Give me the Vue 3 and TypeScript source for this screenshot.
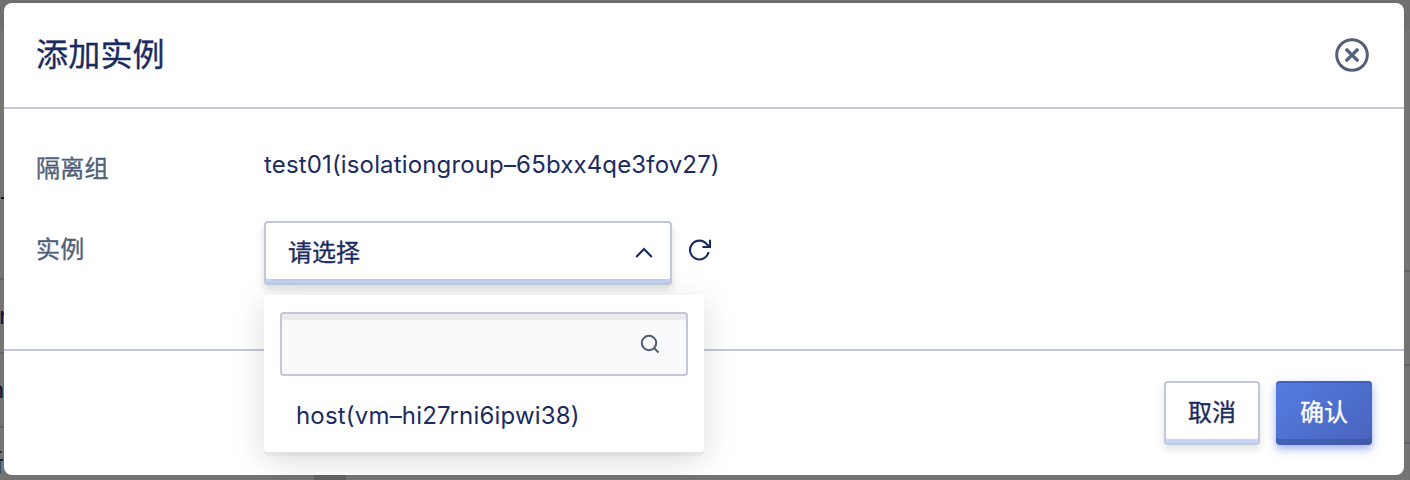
<script setup lang="ts">
import { ref } from 'vue'

interface Fragment { id: string; text: string; kind: string }

const groupName = 'test01(isolationgroup–65bxx4qe3fov27)'
const options = ref<string[]>(['host(vm–hi27rni6ipwi38)'])
const open = ref(true)
const keyword = ref('')
const fragments: Fragment[] = [
  { id: 'b', text: 'n', kind: 'f2' },
  { id: 'c', text: 'n', kind: 'f3' },
  { id: 'd', text: '新', kind: 'f4' },
]
</script>

<template>
  <div class="page">
    <div class="backdrop">
      <i class="topbar"></i>
      <i class="rule l1"></i><i class="rule l2"></i><i class="rule l3"></i>
      <i class="rule r1"></i><i class="rule r2"></i><i class="rule r3"></i>
      <i class="thumb"></i>
      <i class="dash"></i>
      <span v-for="f in fragments" :key="f.id" class="frag" :class="f.kind">{{ f.text }}</span>
    </div>
    <section class="modal">
      <header class="head">
        <h1>添加实例</h1>
        <svg class="close" width="34" height="34" viewBox="0 0 34 34" fill="none" stroke="#515f78">
          <circle cx="17" cy="17" r="15.3" stroke-width="3" />
          <path d="M10.8 10.8L23.2 23.2M23.2 10.8L10.8 23.2" stroke-width="3.3" />
        </svg>
      </header>
      <main class="body">
        <div class="row">
          <label class="label">隔离组</label>
          <span class="value">{{ groupName }}</span>
        </div>
        <div class="row second">
          <label class="label">实例</label>
          <div class="picker">
            <button class="select" @click="open = !open">
              <span>请选择</span>
              <svg width="18" height="12" viewBox="0 0 18 12" fill="none" stroke="#1c2b5f" stroke-width="2.2"><path d="M1.2 10L9 2L16.8 10" /></svg>
            </button>
            <div v-if="open" class="menu">
              <div class="search">
                <input v-model="keyword" />
                <svg width="20" height="20" viewBox="0 0 20 20" fill="none" stroke="#4d5a70" stroke-width="2"><circle cx="9" cy="9" r="7.2" /><path d="M14 14L18.5 18.5" /></svg>
              </div>
              <div v-for="o in options" :key="o" class="option">{{ o }}</div>
            </div>
          </div>
          <svg class="refresh" width="24" height="24" viewBox="0 0 24 24" fill="none" stroke="#1c2b5f" stroke-width="2.1">
            <path d="M20.6 14A9.4 9.4 0 1 1 18.8 6.2L21.2 8.6" /><path d="M22 1.8V9H14.4" />
          </svg>
        </div>
      </main>
      <footer class="foot">
        <button class="btn cancel">取消</button>
        <button class="btn confirm">确认</button>
      </footer>
    </section>
  </div>
</template>

<style>
body { margin: 0; overflow: hidden; }
</style>

<style scoped>
* { box-sizing: border-box; }
.page {
  position: relative; width: 1410px; height: 480px; overflow: hidden; padding: 3px 6px 5px 4px;
  background: #757473; color: #1c2b5f; font: 24px/32px Inter, "Noto Sans CJK SC", sans-serif;
}
.backdrop { position: absolute; inset: 0; }
.backdrop i, .frag { position: absolute; }
.topbar { left: 0; top: 0; width: 100%; height: 30px; background: #6f6f72; }
.rule { height: 2px; background: #62626c; }
.l1, .l2, .l3 { left: 0; width: 4px; }
.r1, .r2, .r3 { right: 0; width: 6px; }
.l1 { top: 278px; } .l2 { top: 352px; } .l3 { top: 426px; }
.r1 { top: 270px; } .r2 { top: 364px; } .r3 { top: 442px; }
.thumb { left: 314px; top: 475px; width: 32px; height: 5px; background: #626265; }
.dash { left: 1px; top: 197px; width: 3px; height: 2px; background: #0e1638; }
.frag { color: #0e1638; }
.f2 { left: -1px; top: 300px; }
.f3 { left: -10px; top: 374px; }
.f4 { left: -20px; top: 447px; }
.modal { position: relative; width: 1400px; height: 472px; border-radius: 8px; background: #fff; display: flex; flex-direction: column; }
.head { height: 106px; flex: none; border-bottom: 2px solid #c3c7da; display: flex; justify-content: space-between; align-items: center; padding: 0 35px 0 32px; }
h1 { margin: 0; font-size: 32px; line-height: 40px; font-weight: 400; letter-spacing: .2px; -webkit-text-stroke: .35px; }
.close { display: block; }
.body { height: 242px; flex: none; border-bottom: 2px solid #c3c7da; padding: 36px 32px 0; }
.row { display: flex; height: 76px; align-items: flex-start; }
.label { width: 228px; color: #515f78; padding-top: 8px; letter-spacing: .2px; -webkit-text-stroke: .35px; }
.value { padding-top: 4px; letter-spacing: .15px; }
.second .label { padding-top: 13px; }
.picker { position: relative; width: 408px; z-index: 2; }
button { font: inherit; color: inherit; margin: 0; -webkit-text-stroke: .35px; }
.select {
  width: 408px; height: 64px; border: 2px solid #c3c7da; border-radius: 4px; background: #fff; padding: 0 17px 0 22px;
  display: flex; align-items: center; justify-content: space-between;
  box-shadow: inset 0 -4px #c1cff3, 0 4px 8px rgba(0, 0, 0, .14);
}
.menu {
  position: absolute; left: 0; top: 74px; width: 440px; height: 157px; border-radius: 4px; padding: 17px 16px 0; background: #fff;
  box-shadow: 0 4px rgba(0, 0, 0, .03), 0 8px 32px rgba(0, 0, 0, .15);
}
.search { height: 64px; border: 2px solid #c3c7da; border-radius: 4px; background: #fafafc; box-shadow: inset 0 6px #ececee; display: flex; align-items: center; padding-right: 26px; }
.search input { flex: 1; min-width: 0; border: 0; outline: 0; background: none; font: inherit; }
.option { margin-top: 8px; padding: 16px 0 0 16px; letter-spacing: .18px; }
.refresh { margin: 17px 0 0 16px; }
.foot { flex: 1; display: flex; justify-content: flex-end; gap: 16px; padding: 30px 32px 0; }
.btn { width: 96px; height: 64px; border-radius: 4px; padding: 0; }
.cancel { border: 2px solid #c3c7da; background: #fff; box-shadow: inset 0 -4px #c6d4f5, 0 4px 8px rgba(0, 0, 0, .12); }
.confirm { border: 0; color: #fff; background: linear-gradient(135deg, #567be2, #4864bc); box-shadow: inset 0 2px rgba(55, 85, 175, .6), inset 0 -6px rgba(55, 80, 150, .5), 0 4px 8px rgba(65, 95, 220, .5); }
</style>
